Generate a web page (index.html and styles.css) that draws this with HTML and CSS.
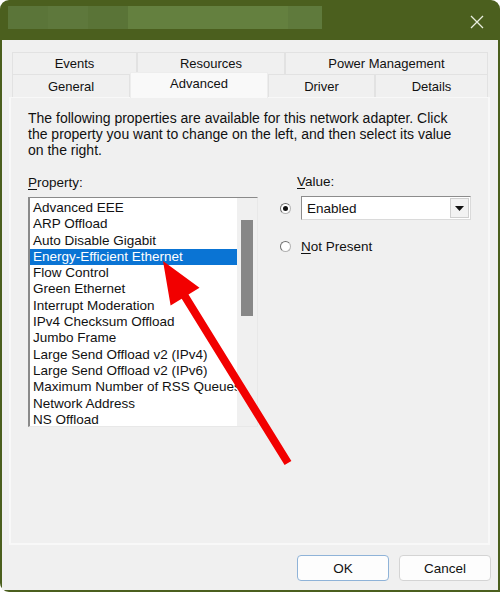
FILE: index.html
```html
<!DOCTYPE html>
<html>
<head>
<meta charset="utf-8">
<link rel="stylesheet" href="styles.css">
</head>
<body>
<div class="window">
  <div class="titlebar">
    <div class="blur">
      <span class="b1"></span><span class="b2"></span><span class="b3"></span><span class="b4"></span><span class="b5"></span><span class="b6"></span>
    </div>
    <svg class="close" width="14" height="14" viewBox="0 0 14 14"><path d="M1 1L13 13M13 1L1 13" stroke="#e9eedf" stroke-width="1.3" fill="none"/></svg>
  </div>
  <div class="client">
    <div class="tabs">
      <div class="tabrow row1">
        <div class="tab t-events">Events</div>
        <div class="tab t-resources">Resources</div>
        <div class="tab t-power">Power Management</div>
      </div>
      <div class="tabrow row2">
        <div class="tab t-general">General</div>
        <div class="tab t-advanced selected">Advanced</div>
        <div class="tab t-driver">Driver</div>
        <div class="tab t-details">Details</div>
      </div>
    </div>
    <div class="panel">
      <p class="desc">The following properties are available for this network adapter. Click<br>the property you want to change on the left, and then select its value<br>on the right.</p>
      <div class="columns">
        <div class="propcol">
          <div class="label"><u>P</u>roperty:</div>
          <div class="listbox">
            <ul class="items">
              <li>Advanced EEE</li>
              <li>ARP Offload</li>
              <li>Auto Disable Gigabit</li>
              <li class="sel">Energy-Efficient Ethernet</li>
              <li>Flow Control</li>
              <li>Green Ethernet</li>
              <li>Interrupt Moderation</li>
              <li>IPv4 Checksum Offload</li>
              <li>Jumbo Frame</li>
              <li>Large Send Offload v2 (IPv4)</li>
              <li>Large Send Offload v2 (IPv6)</li>
              <li>Maximum Number of RSS Queues</li>
              <li>Network Address</li>
              <li>NS Offload</li>
            </ul>
            <div class="scrollbar"><div class="thumb"></div></div>
          </div>
        </div>
        <div class="valcol">
          <div class="label vlabel"><u>V</u>alue:</div>
          <div class="optrow">
            <span class="radio checked"></span>
            <div class="combo">
              <span class="combotext">Enabled</span>
              <span class="combobtn"><svg width="9" height="5" viewBox="0 0 9 5"><path d="M0 0H9L4.5 5Z" fill="#111"/></svg></span>
            </div>
          </div>
          <div class="optrow np">
            <span class="radio"></span>
            <span class="nptext"><u>N</u>ot Present</span>
          </div>
        </div>
      </div>
    </div>
    <div class="footer">
      <button class="btn default">OK</button>
      <button class="btn">Cancel</button>
    </div>
  </div>
</div>
<svg class="arrow" width="500" height="592" viewBox="0 0 500 592">
  <polygon points="163,261 199.5,287.8 188.5,294.6 291.4,460.9 284.6,465.1 181.7,298.8 170.6,305.6" fill="#f20000"/>
</svg>
</body>
</html>
```

FILE: styles.css
```css
html, body {
  margin: 0;
  padding: 0;
}
body {
  width: 500px;
  height: 592px;
  background: #ffffff;
  position: relative;
  overflow: hidden;
  font-family: "Liberation Sans", Arial, sans-serif;
  font-size: 13px;
  color: #000;
}
.window {
  width: 500px;
  height: 592px;
  box-sizing: border-box;
  background: #4b5f1e;
  border-radius: 9px 9px 0 9px;
  padding: 0 2px 2px 2px;
  display: flex;
  flex-direction: column;
}
.titlebar {
  height: 40px;
  flex: none;
  display: flex;
  align-items: flex-start;
  justify-content: space-between;
}
.blur {
  display: flex;
  margin: 6px 0 0 6px;
  height: 23px;
}
.blur span { display: block; height: 23px; }
.b1 { width: 40px; background: #5b7539; }
.b2 { width: 40px; background: #5e783c; }
.b3 { width: 40px; background: #5a7437; }
.b4 { width: 160px; background: #64803f; }
.b5 { width: 34px; background: #5f7a3c; }
.b6 { width: 0; }
.close {
  margin: 15px 14px 0 0;
}
.client {
  flex: 1;
  background: #f0f0f0;
  display: flex;
  flex-direction: column;
}
.tabs {
  margin: 12px 10px 0 10px;
  display: flex;
  flex-direction: column;
}
.tabrow {
  display: flex;
}
.row1 { height: 22px; }
.row2 { height: 23px; }
.tab {
  box-sizing: border-box;
  display: flex;
  align-items: center;
  justify-content: center;
  border: 1px solid #e2e2e2;
  border-bottom: none;
  background: #f0f0f0;
  color: #111;
  font-size: 13px;
}
.t-events { width: 125px; }
.t-resources { width: 148px; }
.t-power { width: 203px; }
.t-general { width: 118px; }
.t-advanced { width: 138px; }
.t-driver { width: 107px; }
.t-details { width: 113px; }
.tab.selected {
  background: #f9f9f9;
  border-color: #ededed;
  margin-top: -2px;
  height: 26px;
  align-items: flex-start;
  padding-top: 3px;
  position: relative;
  z-index: 1;
}
.panel {
  margin: 0 8px 0 7px;
  height: 448px;
  box-sizing: border-box;
  border: 2px solid #f8f8f8;
  border-top: 1px solid #f8f8f8;
  background: #f0f0f0;
  padding: 12px 10px 0 17px;
}
.desc {
  margin: 0;
  line-height: 16px;
  font-size: 14px;
  white-space: nowrap;
  color: #111;
}
.columns {
  display: flex;
  margin-top: 17px;
}
.label {
  line-height: 16px;
  height: 16px;
  color: #111;
  font-size: 13.5px;
}
.label u, .nptext u { text-decoration-thickness: 1px; text-underline-offset: 2px; }
.propcol {
  width: 230px;
}
.listbox {
  margin-top: 6px;
  box-sizing: border-box;
  width: 230px;
  height: 230px;
  border-top: 1px solid #8a8a8a;
  border-left: 2px solid #8a8a8a;
  border-right: 1px solid #e8e8e8;
  border-bottom: 1px solid #e8e8e8;
  background: #fff;
  display: flex;
  overflow: hidden;
}
.items {
  list-style: none;
  margin: 0;
  padding: 2px 0 0 0;
  width: 207px;
  flex: none;
  overflow: hidden;
}
.items li {
  height: 16.3px;
  line-height: 16px;
  padding-left: 3px;
  white-space: nowrap;
  color: #111;
  font-size: 13.5px;
}
.items li.sel {
  background: #0a74d4;
  color: #fff;
}
.scrollbar {
  flex: 1;
  background: #f0f0f0;
  position: relative;
  padding: 22px 4px 0 4px;
}
.thumb {
  height: 96px;
  background: #878787;
}
.valcol {
  margin-left: 22px;
  width: 200px;
}
.vlabel {
  margin-left: 17px;
  margin-top: -1px;
}
.optrow {
  display: flex;
  align-items: center;
  margin-top: 6px;
}
.radio {
  width: 11px;
  height: 11px;
  box-sizing: border-box;
  border-radius: 50%;
  border: 1px solid #b4b4b4;
  border-top-color: #6e6e6e;
  border-left-color: #6e6e6e;
  background: #fff;
  position: relative;
  flex: none;
}
.radio.checked::after {
  content: "";
  position: absolute;
  left: 2px;
  top: 2px;
  width: 5px;
  height: 5px;
  border-radius: 50%;
  background: #111;
}
.combo {
  margin-left: 10px;
  width: 170px;
  height: 24px;
  box-sizing: border-box;
  border-top: 1px solid #8c8c8c;
  border-left: 1px solid #8c8c8c;
  border-right: 1px solid #dadada;
  border-bottom: 1px solid #dadada;
  background: #fff;
  display: flex;
  align-items: center;
  justify-content: space-between;
}
.combotext {
  padding-left: 5px;
  color: #111;
  font-size: 13.5px;
}
.combobtn {
  width: 19px;
  height: 20px;
  margin-right: 1px;
  box-sizing: border-box;
  border: 1px solid #cfcfcf;
  background: #f2f2f2;
  display: flex;
  align-items: center;
  justify-content: center;
}
.np {
  margin-top: 19px;
}
.nptext {
  margin-left: 10px;
  color: #111;
  font-size: 13.5px;
}
.footer {
  display: flex;
  justify-content: flex-end;
  gap: 10px;
  padding: 10px 7px 0 0;
}
.btn {
  width: 92px;
  height: 26px;
  box-sizing: border-box;
  background: #fdfdfd;
  border: 1px solid #d4d4d4;
  border-radius: 4px;
  font-family: "Liberation Sans", Arial, sans-serif;
  font-size: 13.5px;
  color: #111;
  padding: 0;
}
.btn.default {
  border-color: #8fb3d8;
}
.arrow {
  position: absolute;
  left: 0;
  top: 0;
  pointer-events: none;
}
```
